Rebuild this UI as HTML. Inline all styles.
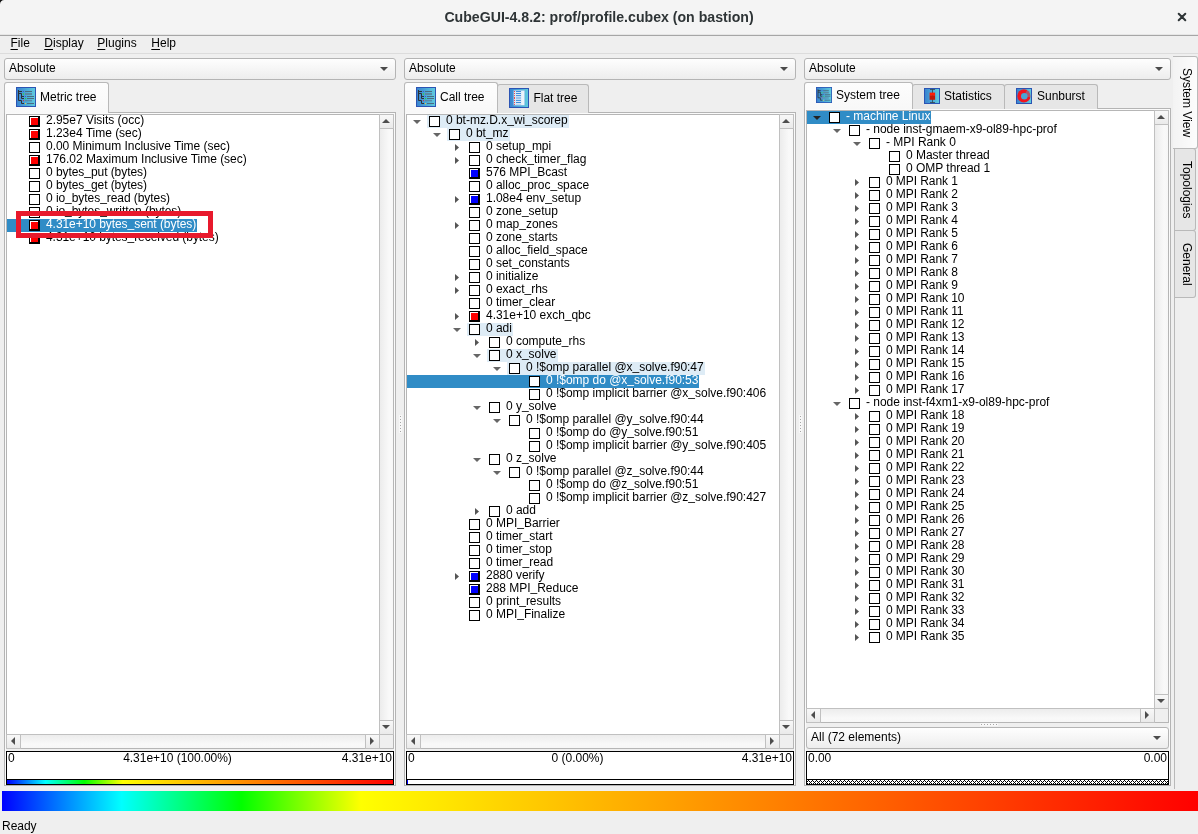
<!DOCTYPE html><html><head><meta charset="utf-8"><title>CubeGUI-4.8.2: prof/profile.cubex (on bastion)</title><style>
*{box-sizing:border-box;margin:0;padding:0}
html,body{width:1198px;height:834px;overflow:hidden}
body{background:#efefef;font-family:"Liberation Sans",sans-serif;font-size:12px;color:#000;position:relative;line-height:13px}
#root{position:absolute;left:0;top:0;width:1198px;height:834px;will-change:transform}
.a{position:absolute}
.t{position:absolute;white-space:nowrap;line-height:13px;height:13px;letter-spacing:-0.02px}
#titlebar{left:0;top:0;width:1198px;height:35px;background:#f4f4f4;border-bottom:1px solid #e6e6e6}
#tbline{left:0;top:35px;width:1198px;height:1px;background:#a6a6a6}
#title{left:0;top:0;width:1198px;height:35px;line-height:34px;text-align:center;font-weight:bold;font-size:14.13px;color:#2e3436;white-space:nowrap}
#menuline{left:0;top:53px;width:1198px;height:1px;background:#dcdcdc}
.menu{top:36px;height:14px;line-height:14px;white-space:nowrap}
.menu u{text-decoration:underline;text-underline-offset:2px;text-decoration-thickness:1px}
.combo{border:1px solid #b4b4b4;border-radius:3px;background:linear-gradient(#fefefe,#ededed);height:22px}
.combo span{position:absolute;left:4px;top:3px;line-height:13px;white-space:nowrap}
.combo i{position:absolute;right:7px;top:8px;width:0;height:0;border-left:4px solid transparent;border-right:4px solid transparent;border-top:4px solid #4b4b4b}
.pane{border:1px solid #b4b4b4;background:#efefef;box-shadow:inset 1px 1px 0 #fafafa,inset -1px -1px 0 #fafafa}
.tab{border:1px solid #b9b9b9;border-bottom:none;border-radius:3px 3px 0 0;background:#e6e6e6}
.tab.sel{background:linear-gradient(#fdfdfd,#f8f8f8)}
.tab span{position:absolute;white-space:nowrap;line-height:13px}
.view{border:1px solid #b6b6b6;background:#fff;overflow:hidden}
.box{position:absolute;width:11px;height:11px;border:1px solid #000;background:#fff}
.box.r{background:#f00;border-width:1px 2px 2px 1px;box-shadow:inset 1px 1px 0 #fff}
.box.b{background:#00f;border-width:1px 2px 2px 1px;box-shadow:inset 1px 1px 0 #fff}
.rt{position:relative;top:-1px;display:inline-block;height:13px;line-height:13px;letter-spacing:-0.02px;white-space:nowrap;vertical-align:top}
.us{position:relative;top:-1px}
.hl{position:absolute;height:13px;white-space:nowrap;background:#deecf6}
.sel{}
.selrow{position:absolute;height:13px;white-space:nowrap;background:#308cc6}
.ar{position:absolute;width:0;height:0;border-top:3.5px solid transparent;border-bottom:3.5px solid transparent;border-left:4px solid #555}
.ad{position:absolute;width:0;height:0;border-left:4px solid transparent;border-right:4px solid transparent;border-top:4px solid #666}
.sbv{position:absolute;background:linear-gradient(90deg,#ececec,#f9f9f9 70%,#f7f7f7);border-left:1px solid #c0c0c0}
.sbh{position:absolute;background:linear-gradient(#ececec,#f9f9f9 70%,#f7f7f7);border-top:1px solid #c0c0c0}
.sbb{position:absolute;background:linear-gradient(#f8f8f8,#eaeaea);border:1px solid #c0c0c0}
.vb{position:absolute;border:1px solid #000;background:#fff}
</style></head><body><div id="root">
<div class="a" id="titlebar"></div><div class="a" id="tbline"></div>
<div class="a" id="title">CubeGUI-4.8.2: prof/profile.cubex (on bastion)</div>
<svg class="a" style="left:0;top:0" width="6" height="6"><path d="M0 0H4.2A4.2 4.2 0 0 0 0 4.2Z" fill="#111"/></svg>
<svg class="a" style="left:1176px;top:11px" width="12" height="12"><path d="M2.7 2.7L9.3 9.3M9.3 2.7L2.7 9.3" stroke="#2e3436" stroke-width="2" stroke-linecap="round" fill="none"/></svg>
<div class="a menu" style="left:10.5px"><u>F</u>ile</div>
<div class="a menu" style="left:44.3px"><u>D</u>isplay</div>
<div class="a menu" style="left:97.3px"><u>P</u>lugins</div>
<div class="a menu" style="left:151.3px"><u>H</u>elp</div>
<div class="a" id="menuline"></div>
<div class="a combo" style="left:4px;top:58px;width:392px;height:22px"><span>Absolute</span><i></i></div>
<div class="a pane" style="left:4px;top:112px;width:392px;height:674px"></div>
<div class="a tab sel" style="left:4px;top:82px;width:105px;height:31px"></div>
<svg class="a" style="left:16px;top:87px" width="20" height="20" viewBox="0 0 20 20"><defs><linearGradient id="g16" x1="0" y1="0" x2="1" y2="0"><stop offset="0" stop-color="#3a84cf"/><stop offset=".5" stop-color="#4aa8d8"/><stop offset="1" stop-color="#60cadd"/></linearGradient></defs><rect width="20" height="20" fill="#2b54b4"/><rect x="1" y="1" width="18" height="18" fill="url(#g16)"/><path d="M2.5 3V13.5H5.5V16.5H8M2.5 4.5H6M2.5 6.5H5.5V11.5H8M5.5 9.5H8" stroke="#2c3238" stroke-width="1" fill="none"/><path d="M9 4.5H16M11 9.5H18M11 11.5H18M11 16.5H18" stroke="#4a6c80" stroke-width="1"/><path d="M9 7H16" stroke="#5a8aa4" stroke-width="2"/><path d="M9 13.7H16" stroke="#5a8aa4" stroke-width="1.2"/><rect x="7" y="4" width="1" height="1" fill="#3858d8"/><rect x="7" y="6" width="1" height="2" fill="#30d060"/><rect x="9" y="9" width="1" height="1" fill="#3858d8"/><rect x="9" y="11" width="1.2" height="1.2" fill="#20e040"/><rect x="7" y="13" width="1" height="1.2" fill="#d03050"/><rect x="9" y="16" width="1" height="1.2" fill="#e8d040"/></svg>
<div class="t" style="left:40px;top:91px">Metric tree</div>
<div class="a view" style="left:6px;top:114px;width:388px;height:635px"></div>
<div class="sbv" style="left:379px;top:115px;width:14px;height:619px"></div>
<div class="sbb" style="left:379px;top:114px;width:15px;height:15px"></div>
<svg class="a" style="left:382.0px;top:119.0px" width="8" height="4"><polygon points="0,4 4,0 8,4" fill="#4d4d4d"/></svg>
<div class="sbb" style="left:379px;top:720px;width:15px;height:15px"></div>
<svg class="a" style="left:382.0px;top:725.0px" width="8" height="4"><polygon points="0,0 8,0 4,4" fill="#4d4d4d"/></svg>
<div class="sbh" style="left:7px;top:734px;width:372px;height:14px"></div>
<div class="sbb" style="left:6px;top:734px;width:15px;height:15px"></div>
<svg class="a" style="left:11.0px;top:737.0px" width="4" height="8"><polygon points="4,0 4,8 0,4" fill="#4d4d4d"/></svg>
<div class="sbb" style="left:365px;top:734px;width:15px;height:15px"></div>
<svg class="a" style="left:370.0px;top:737.0px" width="4" height="8"><polygon points="0,0 0,8 4,4" fill="#4d4d4d"/></svg>
<div class="a" style="left:379px;top:734px;width:14px;height:14px;background:#efefef;border-left:1px solid #c0c0c0;border-top:1px solid #c0c0c0"></div>
<div class="t" style="left:46px;top:114px">2.95e7 Visits (occ)</div>
<div class="box r" style="left:29px;top:116px"></div>
<div class="t" style="left:46px;top:127px">1.23e4 Time (sec)</div>
<div class="box r" style="left:29px;top:129px"></div>
<div class="t" style="left:46px;top:140px">0.00 Minimum Inclusive Time (sec)</div>
<div class="box" style="left:29px;top:142px"></div>
<div class="t" style="left:46px;top:153px">176.02 Maximum Inclusive Time (sec)</div>
<div class="box r" style="left:29px;top:155px"></div>
<div class="t" style="left:46px;top:166px;letter-spacing:-0.06px">0 bytes<span class="us">_</span>put (bytes)</div>
<div class="box" style="left:29px;top:168px"></div>
<div class="t" style="left:46px;top:179px;letter-spacing:-0.06px">0 bytes<span class="us">_</span>get (bytes)</div>
<div class="box" style="left:29px;top:181px"></div>
<div class="t" style="left:46px;top:192px;letter-spacing:-0.06px">0 io<span class="us">_</span>bytes<span class="us">_</span>read (bytes)</div>
<div class="box" style="left:29px;top:194px"></div>
<div class="t" style="left:46px;top:205px;letter-spacing:-0.06px">0 io<span class="us">_</span>bytes<span class="us">_</span>written (bytes)</div>
<div class="box" style="left:29px;top:207px"></div>
<div class="selrow" style="left:7px;top:219px;width:20px"></div>
<div class="selrow" style="left:27px;top:219px;padding:0 1px 0 19px;color:#fff"><span class="rt" style="top:-1px;letter-spacing:-0.06px">4.31e+10 bytes<span class="us">_</span>sent (bytes)</span></div>
<div class="box r" style="left:29px;top:220px"></div>
<div class="t" style="left:46px;top:231px;letter-spacing:-0.06px">4.31e+10 bytes<span class="us">_</span>received (bytes)</div>
<div class="box r" style="left:29px;top:233px"></div>
<div class="a" style="left:16px;top:211px;width:197px;height:27px;border:5px solid #e8192c"></div>
<div class="vb" style="left:6px;top:751px;width:388px;height:34px"></div>
<div class="t" style="left:8px;top:752px">0</div>
<div class="t" style="left:6px;top:752px;width:343px;text-align:center">4.31e+10 (100.00%)</div>
<div class="t" style="left:200px;top:752px;width:192px;text-align:right">4.31e+10</div>
<div class="a" style="left:7px;top:779px;width:386px;height:1px;background:#000"></div>
<div class="a" style="left:7px;top:780px;width:386px;height:4px;background:linear-gradient(90deg,#00f 0%,#0ff 10%,#0f0 20%,#ff0 30%,#f00 100%)"></div>
<div class="a combo" style="left:404px;top:58px;width:392px;height:22px"><span>Absolute</span><i></i></div>
<div class="a pane" style="left:404px;top:112px;width:392px;height:674px"></div>
<div class="a tab" style="left:497px;top:84px;width:92px;height:29px"></div>
<svg class="a" style="left:509px;top:88px" width="20" height="20" viewBox="0 0 20 20"><defs><linearGradient id="g509" x1="0" y1="0" x2="1" y2="0"><stop offset="0" stop-color="#3a84cf"/><stop offset=".5" stop-color="#4aa8d8"/><stop offset="1" stop-color="#60cadd"/></linearGradient></defs><rect width="20" height="20" fill="#2b54b4"/><rect x="1" y="1" width="18" height="18" fill="url(#g509)"/><rect x="4.3" y="2.1" width="11.6" height="15.4" fill="#8fc0ea" opacity=".6"/><rect x="4.8" y="2.6" width="10.6" height="14.6" fill="#dbe9f7"/><rect x="12.4" y="3" width="2.7" height="14" fill="#ecf4fb"/><path d="M7 3.5H12M7 5.5H12M7 7.6H12M7 12.4H12M7 14.5H12" stroke="#3c8edc" stroke-width="1"/><path d="M7 10H12" stroke="#8cbcea" stroke-width="1.6"/><path d="M7 16.4H12" stroke="#b8d6f2" stroke-width="1"/><rect x="5" y="3.0" width="1" height="1" fill="#ee4a50"/><rect x="5" y="5.0" width="1" height="1" fill="#ee4a50"/><rect x="5" y="7.1" width="1" height="1" fill="#ee4a50"/><rect x="5" y="9.0" width="1" height="1" fill="#ee4a50"/><rect x="5" y="10.0" width="1" height="1" fill="#ee4a50"/><rect x="5" y="11.9" width="1" height="1" fill="#ee4a50"/><rect x="5" y="14.0" width="1" height="1" fill="#ee4a50"/><rect x="5" y="15.899999999999999" width="1" height="1" fill="#ee4a50"/></svg>
<div class="t" style="left:533.5px;top:92px">Flat tree</div>
<div class="a tab sel" style="left:404px;top:82px;width:94px;height:31px"></div>
<svg class="a" style="left:416px;top:87px" width="20" height="20" viewBox="0 0 20 20"><defs><linearGradient id="g416" x1="0" y1="0" x2="1" y2="0"><stop offset="0" stop-color="#3a84cf"/><stop offset=".5" stop-color="#4aa8d8"/><stop offset="1" stop-color="#60cadd"/></linearGradient></defs><rect width="20" height="20" fill="#2b54b4"/><rect x="1" y="1" width="18" height="18" fill="url(#g416)"/><path d="M2.5 3V13.5H5.5V16.5H8M2.5 4.5H6M2.5 6.5H5.5V11.5H8M5.5 9.5H8" stroke="#2c3238" stroke-width="1" fill="none"/><path d="M9 4.5H16M11 9.5H18M11 11.5H18M11 16.5H18" stroke="#4a6c80" stroke-width="1"/><path d="M9 7H16" stroke="#5a8aa4" stroke-width="2"/><path d="M9 13.7H16" stroke="#5a8aa4" stroke-width="1.2"/><rect x="7" y="4" width="1" height="1" fill="#3858d8"/><rect x="7" y="6" width="1" height="2" fill="#30d060"/><rect x="9" y="9" width="1" height="1" fill="#3858d8"/><rect x="9" y="11" width="1.2" height="1.2" fill="#20e040"/><rect x="7" y="13" width="1" height="1.2" fill="#d03050"/><rect x="9" y="16" width="1" height="1.2" fill="#e8d040"/></svg>
<div class="t" style="left:440px;top:91px">Call tree</div>
<div class="a view" style="left:406px;top:114px;width:388px;height:635px"></div>
<div class="sbv" style="left:779px;top:115px;width:14px;height:619px"></div>
<div class="sbb" style="left:779px;top:114px;width:15px;height:15px"></div>
<svg class="a" style="left:782.0px;top:119.0px" width="8" height="4"><polygon points="0,4 4,0 8,4" fill="#4d4d4d"/></svg>
<div class="sbb" style="left:779px;top:720px;width:15px;height:15px"></div>
<svg class="a" style="left:782.0px;top:725.0px" width="8" height="4"><polygon points="0,0 8,0 4,4" fill="#4d4d4d"/></svg>
<div class="sbh" style="left:407px;top:734px;width:372px;height:14px"></div>
<div class="sbb" style="left:406px;top:734px;width:15px;height:15px"></div>
<svg class="a" style="left:411.0px;top:737.0px" width="4" height="8"><polygon points="4,0 4,8 0,4" fill="#4d4d4d"/></svg>
<div class="sbb" style="left:765px;top:734px;width:15px;height:15px"></div>
<svg class="a" style="left:770.0px;top:737.0px" width="4" height="8"><polygon points="0,0 0,8 4,4" fill="#4d4d4d"/></svg>
<div class="a" style="left:779px;top:734px;width:14px;height:14px;background:#efefef;border-left:1px solid #c0c0c0;border-top:1px solid #c0c0c0"></div>
<div class="hl" style="left:427px;top:115px;padding:0 1px 0 19px"><span class="rt">0 bt-mz.D.x<span class="us">_</span>wi<span class="us">_</span>scorep</span></div>
<svg class="a" style="left:413.0px;top:119.5px" width="8" height="4"><polygon points="0,0 8,0 4,4" fill="#666"/></svg>
<div class="box" style="left:429px;top:116px"></div>
<div class="hl" style="left:447px;top:128px;padding:0 1px 0 19px"><span class="rt">0 bt<span class="us">_</span>mz</span></div>
<svg class="a" style="left:433.0px;top:132.5px" width="8" height="4"><polygon points="0,0 8,0 4,4" fill="#666"/></svg>
<div class="box" style="left:449px;top:129px"></div>
<div class="t" style="left:486px;top:140px">0 setup<span class="us">_</span>mpi</div>
<svg class="a" style="left:455.0px;top:144.0px" width="4" height="7"><polygon points="0,0 0,7 4,3.5" fill="#555"/></svg>
<div class="box" style="left:469px;top:142px"></div>
<div class="t" style="left:486px;top:153px">0 check<span class="us">_</span>timer<span class="us">_</span>flag</div>
<svg class="a" style="left:455.0px;top:157.0px" width="4" height="7"><polygon points="0,0 0,7 4,3.5" fill="#555"/></svg>
<div class="box" style="left:469px;top:155px"></div>
<div class="t" style="left:486px;top:166px">576 MPI<span class="us">_</span>Bcast</div>
<div class="box b" style="left:469px;top:168px"></div>
<div class="t" style="left:486px;top:179px">0 alloc<span class="us">_</span>proc<span class="us">_</span>space</div>
<div class="box" style="left:469px;top:181px"></div>
<div class="t" style="left:486px;top:192px">1.08e4 env<span class="us">_</span>setup</div>
<svg class="a" style="left:455.0px;top:196.0px" width="4" height="7"><polygon points="0,0 0,7 4,3.5" fill="#555"/></svg>
<div class="box b" style="left:469px;top:194px"></div>
<div class="t" style="left:486px;top:205px">0 zone<span class="us">_</span>setup</div>
<div class="box" style="left:469px;top:207px"></div>
<div class="t" style="left:486px;top:218px">0 map<span class="us">_</span>zones</div>
<svg class="a" style="left:455.0px;top:222.0px" width="4" height="7"><polygon points="0,0 0,7 4,3.5" fill="#555"/></svg>
<div class="box" style="left:469px;top:220px"></div>
<div class="t" style="left:486px;top:231px">0 zone<span class="us">_</span>starts</div>
<div class="box" style="left:469px;top:233px"></div>
<div class="t" style="left:486px;top:244px">0 alloc<span class="us">_</span>field<span class="us">_</span>space</div>
<div class="box" style="left:469px;top:246px"></div>
<div class="t" style="left:486px;top:257px">0 set<span class="us">_</span>constants</div>
<div class="box" style="left:469px;top:259px"></div>
<div class="t" style="left:486px;top:270px">0 initialize</div>
<svg class="a" style="left:455.0px;top:274.0px" width="4" height="7"><polygon points="0,0 0,7 4,3.5" fill="#555"/></svg>
<div class="box" style="left:469px;top:272px"></div>
<div class="t" style="left:486px;top:283px">0 exact<span class="us">_</span>rhs</div>
<svg class="a" style="left:455.0px;top:287.0px" width="4" height="7"><polygon points="0,0 0,7 4,3.5" fill="#555"/></svg>
<div class="box" style="left:469px;top:285px"></div>
<div class="t" style="left:486px;top:296px">0 timer<span class="us">_</span>clear</div>
<div class="box" style="left:469px;top:298px"></div>
<div class="t" style="left:486px;top:309px">4.31e+10 exch<span class="us">_</span>qbc</div>
<svg class="a" style="left:455.0px;top:313.0px" width="4" height="7"><polygon points="0,0 0,7 4,3.5" fill="#555"/></svg>
<div class="box r" style="left:469px;top:311px"></div>
<div class="hl" style="left:467px;top:323px;padding:0 1px 0 19px"><span class="rt">0 adi</span></div>
<svg class="a" style="left:453.0px;top:327.5px" width="8" height="4"><polygon points="0,0 8,0 4,4" fill="#666"/></svg>
<div class="box" style="left:469px;top:324px"></div>
<div class="t" style="left:506px;top:335px">0 compute<span class="us">_</span>rhs</div>
<svg class="a" style="left:475.0px;top:339.0px" width="4" height="7"><polygon points="0,0 0,7 4,3.5" fill="#555"/></svg>
<div class="box" style="left:489px;top:337px"></div>
<div class="hl" style="left:487px;top:349px;padding:0 1px 0 19px"><span class="rt">0 x<span class="us">_</span>solve</span></div>
<svg class="a" style="left:473.0px;top:353.5px" width="8" height="4"><polygon points="0,0 8,0 4,4" fill="#666"/></svg>
<div class="box" style="left:489px;top:350px"></div>
<div class="hl" style="left:507px;top:362px;padding:0 1px 0 19px"><span class="rt">0 !$omp parallel @x<span class="us">_</span>solve.f90:47</span></div>
<svg class="a" style="left:493.0px;top:366.5px" width="8" height="4"><polygon points="0,0 8,0 4,4" fill="#666"/></svg>
<div class="box" style="left:509px;top:363px"></div>
<div class="selrow" style="left:407px;top:375px;width:120px"></div>
<div class="selrow" style="left:527px;top:375px;padding:0 1px 0 19px;color:#fff"><span class="rt" style="top:-1px">0 !$omp do @x<span class="us">_</span>solve.f90:53</span></div>
<div class="box" style="left:529px;top:376px"></div>
<div class="t" style="left:546px;top:387px">0 !$omp implicit barrier @x<span class="us">_</span>solve.f90:406</div>
<div class="box" style="left:529px;top:389px"></div>
<div class="t" style="left:506px;top:400px">0 y<span class="us">_</span>solve</div>
<svg class="a" style="left:473.0px;top:405.5px" width="8" height="4"><polygon points="0,0 8,0 4,4" fill="#666"/></svg>
<div class="box" style="left:489px;top:402px"></div>
<div class="t" style="left:526px;top:413px">0 !$omp parallel @y<span class="us">_</span>solve.f90:44</div>
<svg class="a" style="left:493.0px;top:418.5px" width="8" height="4"><polygon points="0,0 8,0 4,4" fill="#666"/></svg>
<div class="box" style="left:509px;top:415px"></div>
<div class="t" style="left:546px;top:426px">0 !$omp do @y<span class="us">_</span>solve.f90:51</div>
<div class="box" style="left:529px;top:428px"></div>
<div class="t" style="left:546px;top:439px">0 !$omp implicit barrier @y<span class="us">_</span>solve.f90:405</div>
<div class="box" style="left:529px;top:441px"></div>
<div class="t" style="left:506px;top:452px">0 z<span class="us">_</span>solve</div>
<svg class="a" style="left:473.0px;top:457.5px" width="8" height="4"><polygon points="0,0 8,0 4,4" fill="#666"/></svg>
<div class="box" style="left:489px;top:454px"></div>
<div class="t" style="left:526px;top:465px">0 !$omp parallel @z<span class="us">_</span>solve.f90:44</div>
<svg class="a" style="left:493.0px;top:470.5px" width="8" height="4"><polygon points="0,0 8,0 4,4" fill="#666"/></svg>
<div class="box" style="left:509px;top:467px"></div>
<div class="t" style="left:546px;top:478px">0 !$omp do @z<span class="us">_</span>solve.f90:51</div>
<div class="box" style="left:529px;top:480px"></div>
<div class="t" style="left:546px;top:491px">0 !$omp implicit barrier @z<span class="us">_</span>solve.f90:427</div>
<div class="box" style="left:529px;top:493px"></div>
<div class="t" style="left:506px;top:504px">0 add</div>
<svg class="a" style="left:475.0px;top:508.0px" width="4" height="7"><polygon points="0,0 0,7 4,3.5" fill="#555"/></svg>
<div class="box" style="left:489px;top:506px"></div>
<div class="t" style="left:486px;top:517px">0 MPI<span class="us">_</span>Barrier</div>
<div class="box" style="left:469px;top:519px"></div>
<div class="t" style="left:486px;top:530px">0 timer<span class="us">_</span>start</div>
<div class="box" style="left:469px;top:532px"></div>
<div class="t" style="left:486px;top:543px">0 timer<span class="us">_</span>stop</div>
<div class="box" style="left:469px;top:545px"></div>
<div class="t" style="left:486px;top:556px">0 timer<span class="us">_</span>read</div>
<div class="box" style="left:469px;top:558px"></div>
<div class="t" style="left:486px;top:569px">2880 verify</div>
<svg class="a" style="left:455.0px;top:573.0px" width="4" height="7"><polygon points="0,0 0,7 4,3.5" fill="#555"/></svg>
<div class="box b" style="left:469px;top:571px"></div>
<div class="t" style="left:486px;top:582px">288 MPI<span class="us">_</span>Reduce</div>
<div class="box b" style="left:469px;top:584px"></div>
<div class="t" style="left:486px;top:595px">0 print<span class="us">_</span>results</div>
<div class="box" style="left:469px;top:597px"></div>
<div class="t" style="left:486px;top:608px">0 MPI<span class="us">_</span>Finalize</div>
<div class="box" style="left:469px;top:610px"></div>
<div class="vb" style="left:406px;top:751px;width:388px;height:34px"></div>
<div class="t" style="left:408px;top:752px">0</div>
<div class="t" style="left:406px;top:752px;width:343px;text-align:center">0 (0.00%)</div>
<div class="t" style="left:600px;top:752px;width:192px;text-align:right">4.31e+10</div>
<div class="a" style="left:407px;top:779px;width:386px;height:1px;background:#000"></div>
<div class="a" style="left:407px;top:780px;width:1px;height:4px;background:#00f"></div>
<div class="a combo" style="left:804px;top:58px;width:367px;height:22px"><span>Absolute</span><i></i></div>
<div class="a pane" style="left:804px;top:108px;width:367px;height:678px"></div>
<div class="a tab" style="left:912px;top:84px;width:93px;height:25px"></div>
<svg class="a" style="left:924px;top:88px" width="16" height="16" viewBox="0 0 16 16"><defs><linearGradient id="g924" x1="0" y1="0" x2="1" y2="0"><stop offset="0" stop-color="#3a84cf"/><stop offset=".5" stop-color="#4aa8d8"/><stop offset="1" stop-color="#60cadd"/></linearGradient></defs><rect width="16" height="16" fill="#2b54b4"/><rect x="1" y="1" width="14" height="14" fill="url(#g924)"/><path d="M8.5 1.5V14.5M6 1.5H11M6 14.5H11" stroke="#30343c" stroke-width="1" stroke-opacity=".7"/><rect x="5.6" y="4.6" width="5.5" height="3.2" fill="#ff1c04"/><rect x="5.6" y="7.6" width="5.5" height="4.2" fill="#c01808"/></svg>
<div class="t" style="left:944px;top:90px">Statistics</div>
<div class="a tab" style="left:1004px;top:84px;width:94px;height:25px"></div>
<svg class="a" style="left:1016px;top:88px" width="16" height="16" viewBox="0 0 16 16"><defs><linearGradient id="g1016" x1="0" y1="0" x2="1" y2="0"><stop offset="0" stop-color="#3a84cf"/><stop offset=".5" stop-color="#4aa8d8"/><stop offset="1" stop-color="#60cadd"/></linearGradient></defs><rect width="16" height="16" fill="#2b54b4"/><rect x="1" y="1" width="14" height="14" fill="url(#g1016)"/><circle cx="7.9" cy="7.9" r="6.6" fill="#f01420"/><path d="M7.9 7.9L11.5 1.2A7 7 0 0 1 15 9.5Z" fill="#58b0d4" opacity=".4"/><circle cx="8.3" cy="8.3" r="3.3" fill="#48a4d6"/></svg>
<div class="t" style="left:1037px;top:90px">Sunburst</div>
<div class="a tab sel" style="left:804px;top:82px;width:109px;height:27px"></div>
<svg class="a" style="left:816px;top:87px" width="16" height="16" viewBox="0 0 20 20"><defs><linearGradient id="g816" x1="0" y1="0" x2="1" y2="0"><stop offset="0" stop-color="#3a84cf"/><stop offset=".5" stop-color="#4aa8d8"/><stop offset="1" stop-color="#60cadd"/></linearGradient></defs><rect width="20" height="20" fill="#2b54b4"/><rect x="1" y="1" width="18" height="18" fill="url(#g816)"/><path d="M2.5 3V13.5H5.5V16.5H8M2.5 4.5H6M2.5 6.5H5.5V11.5H8M5.5 9.5H8" stroke="#2c3238" stroke-width="1" fill="none"/><path d="M9 4.5H16M11 9.5H18M11 11.5H18M11 16.5H18" stroke="#4a6c80" stroke-width="1"/><path d="M9 7H16" stroke="#5a8aa4" stroke-width="2"/><path d="M9 13.7H16" stroke="#5a8aa4" stroke-width="1.2"/><rect x="7" y="4" width="1" height="1" fill="#3858d8"/><rect x="7" y="6" width="1" height="2" fill="#30d060"/><rect x="9" y="9" width="1" height="1" fill="#3858d8"/><rect x="9" y="11" width="1.2" height="1.2" fill="#20e040"/><rect x="7" y="13" width="1" height="1.2" fill="#d03050"/><rect x="9" y="16" width="1" height="1.2" fill="#e8d040"/></svg>
<div class="t" style="left:836px;top:89px">System tree</div>
<div class="a view" style="left:806px;top:110px;width:363px;height:613px"></div>
<div class="sbv" style="left:1154px;top:111px;width:14px;height:597px"></div>
<div class="sbb" style="left:1154px;top:110px;width:15px;height:15px"></div>
<svg class="a" style="left:1157.0px;top:115.0px" width="8" height="4"><polygon points="0,4 4,0 8,4" fill="#4d4d4d"/></svg>
<div class="sbb" style="left:1154px;top:694px;width:15px;height:15px"></div>
<svg class="a" style="left:1157.0px;top:699.0px" width="8" height="4"><polygon points="0,0 8,0 4,4" fill="#4d4d4d"/></svg>
<div class="sbh" style="left:807px;top:708px;width:347px;height:14px"></div>
<div class="sbb" style="left:806px;top:708px;width:15px;height:15px"></div>
<svg class="a" style="left:811.0px;top:711.0px" width="4" height="8"><polygon points="4,0 4,8 0,4" fill="#4d4d4d"/></svg>
<div class="sbb" style="left:1140px;top:708px;width:15px;height:15px"></div>
<svg class="a" style="left:1145.0px;top:711.0px" width="4" height="8"><polygon points="0,0 0,8 4,4" fill="#4d4d4d"/></svg>
<div class="a" style="left:1154px;top:708px;width:14px;height:14px;background:#efefef;border-left:1px solid #c0c0c0;border-top:1px solid #c0c0c0"></div>
<div class="selrow" style="left:807px;top:111px;width:20px"></div>
<div class="selrow" style="left:827px;top:111px;padding:0 1px 0 19px;color:#fff"><span class="rt" style="top:-1px">- machine Linux</span></div>
<svg class="a" style="left:813.0px;top:115.5px" width="8" height="4"><polygon points="0,0 8,0 4,4" fill="#222"/></svg>
<div class="box" style="left:829px;top:112px"></div>
<div class="t" style="left:866px;top:123px">- node inst-gmaem-x9-ol89-hpc-prof</div>
<svg class="a" style="left:833.0px;top:128.5px" width="8" height="4"><polygon points="0,0 8,0 4,4" fill="#666"/></svg>
<div class="box" style="left:849px;top:125px"></div>
<div class="t" style="left:886px;top:136px">- MPI Rank 0</div>
<svg class="a" style="left:853.0px;top:141.5px" width="8" height="4"><polygon points="0,0 8,0 4,4" fill="#666"/></svg>
<div class="box" style="left:869px;top:138px"></div>
<div class="t" style="left:906px;top:149px">0 Master thread</div>
<div class="box" style="left:889px;top:151px"></div>
<div class="t" style="left:906px;top:162px">0 OMP thread 1</div>
<div class="box" style="left:889px;top:164px"></div>
<div class="t" style="left:886px;top:175px;letter-spacing:-0.08px">0 MPI Rank 1</div>
<svg class="a" style="left:855.0px;top:179.0px" width="4" height="7"><polygon points="0,0 0,7 4,3.5" fill="#555"/></svg>
<div class="box" style="left:869px;top:177px"></div>
<div class="t" style="left:886px;top:188px;letter-spacing:-0.08px">0 MPI Rank 2</div>
<svg class="a" style="left:855.0px;top:192.0px" width="4" height="7"><polygon points="0,0 0,7 4,3.5" fill="#555"/></svg>
<div class="box" style="left:869px;top:190px"></div>
<div class="t" style="left:886px;top:201px;letter-spacing:-0.08px">0 MPI Rank 3</div>
<svg class="a" style="left:855.0px;top:205.0px" width="4" height="7"><polygon points="0,0 0,7 4,3.5" fill="#555"/></svg>
<div class="box" style="left:869px;top:203px"></div>
<div class="t" style="left:886px;top:214px;letter-spacing:-0.08px">0 MPI Rank 4</div>
<svg class="a" style="left:855.0px;top:218.0px" width="4" height="7"><polygon points="0,0 0,7 4,3.5" fill="#555"/></svg>
<div class="box" style="left:869px;top:216px"></div>
<div class="t" style="left:886px;top:227px;letter-spacing:-0.08px">0 MPI Rank 5</div>
<svg class="a" style="left:855.0px;top:231.0px" width="4" height="7"><polygon points="0,0 0,7 4,3.5" fill="#555"/></svg>
<div class="box" style="left:869px;top:229px"></div>
<div class="t" style="left:886px;top:240px;letter-spacing:-0.08px">0 MPI Rank 6</div>
<svg class="a" style="left:855.0px;top:244.0px" width="4" height="7"><polygon points="0,0 0,7 4,3.5" fill="#555"/></svg>
<div class="box" style="left:869px;top:242px"></div>
<div class="t" style="left:886px;top:253px;letter-spacing:-0.08px">0 MPI Rank 7</div>
<svg class="a" style="left:855.0px;top:257.0px" width="4" height="7"><polygon points="0,0 0,7 4,3.5" fill="#555"/></svg>
<div class="box" style="left:869px;top:255px"></div>
<div class="t" style="left:886px;top:266px;letter-spacing:-0.08px">0 MPI Rank 8</div>
<svg class="a" style="left:855.0px;top:270.0px" width="4" height="7"><polygon points="0,0 0,7 4,3.5" fill="#555"/></svg>
<div class="box" style="left:869px;top:268px"></div>
<div class="t" style="left:886px;top:279px;letter-spacing:-0.08px">0 MPI Rank 9</div>
<svg class="a" style="left:855.0px;top:283.0px" width="4" height="7"><polygon points="0,0 0,7 4,3.5" fill="#555"/></svg>
<div class="box" style="left:869px;top:281px"></div>
<div class="t" style="left:886px;top:292px;letter-spacing:-0.08px">0 MPI Rank 10</div>
<svg class="a" style="left:855.0px;top:296.0px" width="4" height="7"><polygon points="0,0 0,7 4,3.5" fill="#555"/></svg>
<div class="box" style="left:869px;top:294px"></div>
<div class="t" style="left:886px;top:305px;letter-spacing:-0.08px">0 MPI Rank 11</div>
<svg class="a" style="left:855.0px;top:309.0px" width="4" height="7"><polygon points="0,0 0,7 4,3.5" fill="#555"/></svg>
<div class="box" style="left:869px;top:307px"></div>
<div class="t" style="left:886px;top:318px;letter-spacing:-0.08px">0 MPI Rank 12</div>
<svg class="a" style="left:855.0px;top:322.0px" width="4" height="7"><polygon points="0,0 0,7 4,3.5" fill="#555"/></svg>
<div class="box" style="left:869px;top:320px"></div>
<div class="t" style="left:886px;top:331px;letter-spacing:-0.08px">0 MPI Rank 13</div>
<svg class="a" style="left:855.0px;top:335.0px" width="4" height="7"><polygon points="0,0 0,7 4,3.5" fill="#555"/></svg>
<div class="box" style="left:869px;top:333px"></div>
<div class="t" style="left:886px;top:344px;letter-spacing:-0.08px">0 MPI Rank 14</div>
<svg class="a" style="left:855.0px;top:348.0px" width="4" height="7"><polygon points="0,0 0,7 4,3.5" fill="#555"/></svg>
<div class="box" style="left:869px;top:346px"></div>
<div class="t" style="left:886px;top:357px;letter-spacing:-0.08px">0 MPI Rank 15</div>
<svg class="a" style="left:855.0px;top:361.0px" width="4" height="7"><polygon points="0,0 0,7 4,3.5" fill="#555"/></svg>
<div class="box" style="left:869px;top:359px"></div>
<div class="t" style="left:886px;top:370px;letter-spacing:-0.08px">0 MPI Rank 16</div>
<svg class="a" style="left:855.0px;top:374.0px" width="4" height="7"><polygon points="0,0 0,7 4,3.5" fill="#555"/></svg>
<div class="box" style="left:869px;top:372px"></div>
<div class="t" style="left:886px;top:383px;letter-spacing:-0.08px">0 MPI Rank 17</div>
<svg class="a" style="left:855.0px;top:387.0px" width="4" height="7"><polygon points="0,0 0,7 4,3.5" fill="#555"/></svg>
<div class="box" style="left:869px;top:385px"></div>
<div class="t" style="left:866px;top:396px">- node inst-f4xm1-x9-ol89-hpc-prof</div>
<svg class="a" style="left:833.0px;top:401.5px" width="8" height="4"><polygon points="0,0 8,0 4,4" fill="#666"/></svg>
<div class="box" style="left:849px;top:398px"></div>
<div class="t" style="left:886px;top:409px;letter-spacing:-0.08px">0 MPI Rank 18</div>
<svg class="a" style="left:855.0px;top:413.0px" width="4" height="7"><polygon points="0,0 0,7 4,3.5" fill="#555"/></svg>
<div class="box" style="left:869px;top:411px"></div>
<div class="t" style="left:886px;top:422px;letter-spacing:-0.08px">0 MPI Rank 19</div>
<svg class="a" style="left:855.0px;top:426.0px" width="4" height="7"><polygon points="0,0 0,7 4,3.5" fill="#555"/></svg>
<div class="box" style="left:869px;top:424px"></div>
<div class="t" style="left:886px;top:435px;letter-spacing:-0.08px">0 MPI Rank 20</div>
<svg class="a" style="left:855.0px;top:439.0px" width="4" height="7"><polygon points="0,0 0,7 4,3.5" fill="#555"/></svg>
<div class="box" style="left:869px;top:437px"></div>
<div class="t" style="left:886px;top:448px;letter-spacing:-0.08px">0 MPI Rank 21</div>
<svg class="a" style="left:855.0px;top:452.0px" width="4" height="7"><polygon points="0,0 0,7 4,3.5" fill="#555"/></svg>
<div class="box" style="left:869px;top:450px"></div>
<div class="t" style="left:886px;top:461px;letter-spacing:-0.08px">0 MPI Rank 22</div>
<svg class="a" style="left:855.0px;top:465.0px" width="4" height="7"><polygon points="0,0 0,7 4,3.5" fill="#555"/></svg>
<div class="box" style="left:869px;top:463px"></div>
<div class="t" style="left:886px;top:474px;letter-spacing:-0.08px">0 MPI Rank 23</div>
<svg class="a" style="left:855.0px;top:478.0px" width="4" height="7"><polygon points="0,0 0,7 4,3.5" fill="#555"/></svg>
<div class="box" style="left:869px;top:476px"></div>
<div class="t" style="left:886px;top:487px;letter-spacing:-0.08px">0 MPI Rank 24</div>
<svg class="a" style="left:855.0px;top:491.0px" width="4" height="7"><polygon points="0,0 0,7 4,3.5" fill="#555"/></svg>
<div class="box" style="left:869px;top:489px"></div>
<div class="t" style="left:886px;top:500px;letter-spacing:-0.08px">0 MPI Rank 25</div>
<svg class="a" style="left:855.0px;top:504.0px" width="4" height="7"><polygon points="0,0 0,7 4,3.5" fill="#555"/></svg>
<div class="box" style="left:869px;top:502px"></div>
<div class="t" style="left:886px;top:513px;letter-spacing:-0.08px">0 MPI Rank 26</div>
<svg class="a" style="left:855.0px;top:517.0px" width="4" height="7"><polygon points="0,0 0,7 4,3.5" fill="#555"/></svg>
<div class="box" style="left:869px;top:515px"></div>
<div class="t" style="left:886px;top:526px;letter-spacing:-0.08px">0 MPI Rank 27</div>
<svg class="a" style="left:855.0px;top:530.0px" width="4" height="7"><polygon points="0,0 0,7 4,3.5" fill="#555"/></svg>
<div class="box" style="left:869px;top:528px"></div>
<div class="t" style="left:886px;top:539px;letter-spacing:-0.08px">0 MPI Rank 28</div>
<svg class="a" style="left:855.0px;top:543.0px" width="4" height="7"><polygon points="0,0 0,7 4,3.5" fill="#555"/></svg>
<div class="box" style="left:869px;top:541px"></div>
<div class="t" style="left:886px;top:552px;letter-spacing:-0.08px">0 MPI Rank 29</div>
<svg class="a" style="left:855.0px;top:556.0px" width="4" height="7"><polygon points="0,0 0,7 4,3.5" fill="#555"/></svg>
<div class="box" style="left:869px;top:554px"></div>
<div class="t" style="left:886px;top:565px;letter-spacing:-0.08px">0 MPI Rank 30</div>
<svg class="a" style="left:855.0px;top:569.0px" width="4" height="7"><polygon points="0,0 0,7 4,3.5" fill="#555"/></svg>
<div class="box" style="left:869px;top:567px"></div>
<div class="t" style="left:886px;top:578px;letter-spacing:-0.08px">0 MPI Rank 31</div>
<svg class="a" style="left:855.0px;top:582.0px" width="4" height="7"><polygon points="0,0 0,7 4,3.5" fill="#555"/></svg>
<div class="box" style="left:869px;top:580px"></div>
<div class="t" style="left:886px;top:591px;letter-spacing:-0.08px">0 MPI Rank 32</div>
<svg class="a" style="left:855.0px;top:595.0px" width="4" height="7"><polygon points="0,0 0,7 4,3.5" fill="#555"/></svg>
<div class="box" style="left:869px;top:593px"></div>
<div class="t" style="left:886px;top:604px;letter-spacing:-0.08px">0 MPI Rank 33</div>
<svg class="a" style="left:855.0px;top:608.0px" width="4" height="7"><polygon points="0,0 0,7 4,3.5" fill="#555"/></svg>
<div class="box" style="left:869px;top:606px"></div>
<div class="t" style="left:886px;top:617px;letter-spacing:-0.08px">0 MPI Rank 34</div>
<svg class="a" style="left:855.0px;top:621.0px" width="4" height="7"><polygon points="0,0 0,7 4,3.5" fill="#555"/></svg>
<div class="box" style="left:869px;top:619px"></div>
<div class="t" style="left:886px;top:630px;letter-spacing:-0.08px">0 MPI Rank 35</div>
<svg class="a" style="left:855.0px;top:634.0px" width="4" height="7"><polygon points="0,0 0,7 4,3.5" fill="#555"/></svg>
<div class="box" style="left:869px;top:632px"></div>
<div class="a" style="left:981px;top:724px;width:1px;height:1px;background:#a6a6a6;box-shadow:0 0 0 1px rgba(255,255,255,.55)"></div>
<div class="a" style="left:984px;top:724px;width:1px;height:1px;background:#a6a6a6;box-shadow:0 0 0 1px rgba(255,255,255,.55)"></div>
<div class="a" style="left:987px;top:724px;width:1px;height:1px;background:#a6a6a6;box-shadow:0 0 0 1px rgba(255,255,255,.55)"></div>
<div class="a" style="left:990px;top:724px;width:1px;height:1px;background:#a6a6a6;box-shadow:0 0 0 1px rgba(255,255,255,.55)"></div>
<div class="a" style="left:993px;top:724px;width:1px;height:1px;background:#a6a6a6;box-shadow:0 0 0 1px rgba(255,255,255,.55)"></div>
<div class="a" style="left:996px;top:724px;width:1px;height:1px;background:#a6a6a6;box-shadow:0 0 0 1px rgba(255,255,255,.55)"></div>
<div class="a" style="left:400px;top:416px;width:1px;height:1px;background:#a6a6a6;box-shadow:0 0 0 1px rgba(255,255,255,.55)"></div>
<div class="a" style="left:400px;top:419px;width:1px;height:1px;background:#a6a6a6;box-shadow:0 0 0 1px rgba(255,255,255,.55)"></div>
<div class="a" style="left:400px;top:422px;width:1px;height:1px;background:#a6a6a6;box-shadow:0 0 0 1px rgba(255,255,255,.55)"></div>
<div class="a" style="left:400px;top:425px;width:1px;height:1px;background:#a6a6a6;box-shadow:0 0 0 1px rgba(255,255,255,.55)"></div>
<div class="a" style="left:400px;top:428px;width:1px;height:1px;background:#a6a6a6;box-shadow:0 0 0 1px rgba(255,255,255,.55)"></div>
<div class="a" style="left:400px;top:431px;width:1px;height:1px;background:#a6a6a6;box-shadow:0 0 0 1px rgba(255,255,255,.55)"></div>
<div class="a" style="left:800px;top:416px;width:1px;height:1px;background:#a6a6a6;box-shadow:0 0 0 1px rgba(255,255,255,.55)"></div>
<div class="a" style="left:800px;top:419px;width:1px;height:1px;background:#a6a6a6;box-shadow:0 0 0 1px rgba(255,255,255,.55)"></div>
<div class="a" style="left:800px;top:422px;width:1px;height:1px;background:#a6a6a6;box-shadow:0 0 0 1px rgba(255,255,255,.55)"></div>
<div class="a" style="left:800px;top:425px;width:1px;height:1px;background:#a6a6a6;box-shadow:0 0 0 1px rgba(255,255,255,.55)"></div>
<div class="a" style="left:800px;top:428px;width:1px;height:1px;background:#a6a6a6;box-shadow:0 0 0 1px rgba(255,255,255,.55)"></div>
<div class="a" style="left:800px;top:431px;width:1px;height:1px;background:#a6a6a6;box-shadow:0 0 0 1px rgba(255,255,255,.55)"></div>
<div class="a combo" style="left:806px;top:727px;width:363px;height:22px"><span>All (72 elements)</span><i></i></div>
<div class="vb" style="left:806px;top:751px;width:363px;height:34px"></div>
<div class="t" style="left:808px;top:752px">0.00</div>
<div class="t" style="left:1000px;top:752px;width:167px;text-align:right">0.00</div>
<div class="a" style="left:807px;top:779px;width:361px;height:1px;background:#000"></div>
<svg class="a" style="left:807px;top:780px" width="361" height="4" shape-rendering="crispEdges"><defs><pattern id="hp" x="-3" y="0" width="4" height="4" patternUnits="userSpaceOnUse"><rect width="4" height="4" fill="#fff"/><path d="M0 0h1v1h-1zM1 1h1v1h-1zM3 1h1v1h-1zM2 2h1v1h-1zM1 3h1v1h-1zM3 3h1v1h-1z" fill="#000"/></pattern></defs><rect width="361" height="4" fill="url(#hp)"/></svg>
<div class="a" style="left:1174px;top:148px;width:1px;height:641px;background:#b9b9b9"></div>
<div class="a" style="left:1173px;top:56px;width:25px;height:93px;border:1px solid #b9b9b9;border-left:none;border-radius:0 3px 3px 0;background:linear-gradient(90deg,#f3f3f3,#fcfcfc)"></div>
<div class="a" style="left:1180px;top:68px;width:14px;writing-mode:vertical-rl;white-space:nowrap;line-height:14px">System View</div>
<div class="a" style="left:1175px;top:148px;width:21px;height:83px;border:1px solid #b9b9b9;border-left:none;border-radius:0 3px 3px 0;background:#e6e6e6"></div>
<div class="a" style="left:1180px;top:161px;width:14px;writing-mode:vertical-rl;white-space:nowrap;line-height:14px">Topologies</div>
<div class="a" style="left:1175px;top:230px;width:21px;height:68px;border:1px solid #b9b9b9;border-left:none;border-radius:0 3px 3px 0;background:#e6e6e6"></div>
<div class="a" style="left:1180px;top:243px;width:14px;writing-mode:vertical-rl;white-space:nowrap;line-height:14px">General</div>
<div class="a" style="left:2px;top:791px;width:1196px;height:20px;background:linear-gradient(90deg,#00f 0%,#0ff 10%,#0f0 20%,#ff0 30%,#f00 100%)"></div>
<div class="t" style="left:2px;top:820px">Ready</div>
</div></body></html>
